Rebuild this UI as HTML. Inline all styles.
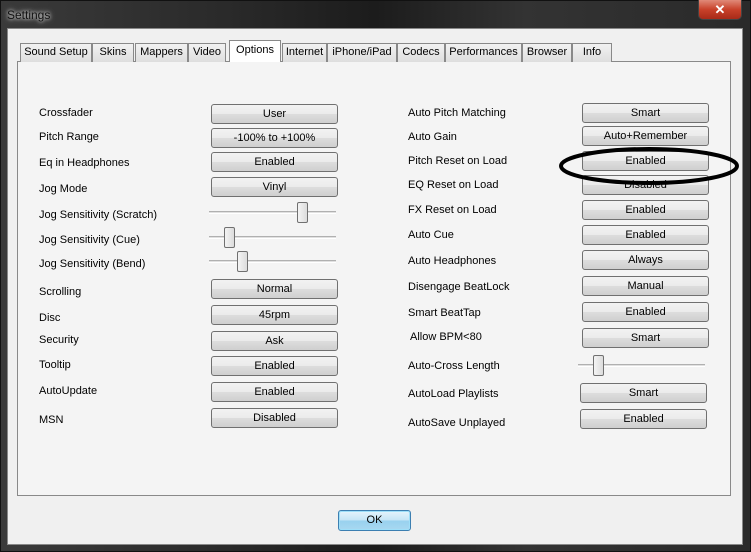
<!DOCTYPE html>
<html><head><style>
*{margin:0;padding:0;box-sizing:border-box}
body{width:751px;height:552px;overflow:hidden;background:#222;font-family:"Liberation Sans",sans-serif;font-size:11px;color:#000;position:relative}
.frame{position:absolute;left:0;top:0;width:751px;height:552px;background:linear-gradient(90deg,#3a3a3a,#2a2a2a 30%,#1c1c1c 50%,#333 70%,#2a2a2a);border:1px solid #111}
.title{position:absolute;left:7px;top:8px;color:#111;font-size:12px;text-shadow:0 0 6px #ccc,0 0 3px #ddd}
.close{position:absolute;left:698px;top:0;width:44px;height:20px;background:linear-gradient(#e08a78,#c8412a 50%,#a82a18);border:1px solid #444;border-top:none;border-radius:0 0 5px 5px;color:#fff;font-weight:bold;text-align:center;font-size:13px;line-height:19px}
.client{position:absolute;left:7px;top:28px;width:736px;height:517px;background:#f0f0f0;border:1px solid #888}
.panel{position:absolute;left:17px;top:61px;width:714px;height:435px;border:1px solid #898989;background:#f4f4f4}
.tab{position:absolute;top:43px;height:19px;border:1px solid #898989;border-bottom:none;background:linear-gradient(#f2f2f2,#dedede);text-align:center;line-height:17px}
.tab.sel{top:40px;height:22px;background:#fff;line-height:19px}
.lbl{position:absolute;line-height:13px}
.btn{position:absolute;width:127px;height:20px;border:1px solid #707070;border-radius:3px;background:linear-gradient(#f2f2f2 0,#ebebeb 50%,#dddddd 51%,#cfcfcf);text-align:center;line-height:18px}
.trk{position:absolute;width:127px;height:3px;border-top:1px solid #b0b0b0;border-bottom:1px solid #fff;background:#e0e0e0}
.th{position:absolute;width:11px;height:21px;border:1px solid #707070;border-radius:2px;background:linear-gradient(90deg,#f4f4f4,#dcdcdc)}
.ok{position:absolute;left:338px;top:510px;width:73px;height:21px;border:1px solid #3c7fb1;border-radius:3px;background:linear-gradient(#e5f4fc,#c4e5f6 50%,#98d1ef 51%,#a8d8f0);box-shadow:inset 0 0 0 1px #9edff9;text-align:center;line-height:19px}
</style></head><body>
<div class="frame"></div>
<div class="title">Settings</div>
<div class="close">✕</div>
<div class="client"></div>
<div class="panel"></div>
<div class="tab" style="left:20px;width:72px">Sound Setup</div>
<div class="tab" style="left:92px;width:42px">Skins</div>
<div class="tab" style="left:135px;width:53px">Mappers</div>
<div class="tab" style="left:188px;width:38px">Video</div>
<div class="tab" style="left:282px;width:45px">Internet</div>
<div class="tab" style="left:327px;width:70px">iPhone/iPad</div>
<div class="tab" style="left:397px;width:48px">Codecs</div>
<div class="tab" style="left:445px;width:77px">Performances</div>
<div class="tab" style="left:522px;width:50px">Browser</div>
<div class="tab" style="left:572px;width:40px">Info</div>
<div class="tab sel" style="left:229px;width:52px">Options</div>

<div class="lbl" style="left:39px;top:107px">Crossfader</div>
<div class="lbl" style="left:39px;top:131px">Pitch Range</div>
<div class="lbl" style="left:39px;top:157px">Eq in Headphones</div>
<div class="lbl" style="left:39px;top:183px">Jog Mode</div>
<div class="lbl" style="left:39px;top:209px">Jog Sensitivity (Scratch)</div>
<div class="lbl" style="left:39px;top:234px">Jog Sensitivity (Cue)</div>
<div class="lbl" style="left:39px;top:258px">Jog Sensitivity (Bend)</div>
<div class="lbl" style="left:39px;top:286px">Scrolling</div>
<div class="lbl" style="left:39px;top:312px">Disc</div>
<div class="lbl" style="left:39px;top:334px">Security</div>
<div class="lbl" style="left:39px;top:359px">Tooltip</div>
<div class="lbl" style="left:39px;top:385px">AutoUpdate</div>
<div class="lbl" style="left:39px;top:414px">MSN</div>

<div class="btn" style="left:211px;top:104px">User</div>
<div class="btn" style="left:211px;top:128px">-100% to +100%</div>
<div class="btn" style="left:211px;top:152px">Enabled</div>
<div class="btn" style="left:211px;top:177px">Vinyl</div>
<div class="trk" style="left:209px;top:211px"></div><div class="th" style="left:297px;top:202px"></div>
<div class="trk" style="left:209px;top:236px"></div><div class="th" style="left:224px;top:227px"></div>
<div class="trk" style="left:209px;top:260px"></div><div class="th" style="left:237px;top:251px"></div>
<div class="btn" style="left:211px;top:279px">Normal</div>
<div class="btn" style="left:211px;top:305px">45rpm</div>
<div class="btn" style="left:211px;top:331px">Ask</div>
<div class="btn" style="left:211px;top:356px">Enabled</div>
<div class="btn" style="left:211px;top:382px">Enabled</div>
<div class="btn" style="left:211px;top:408px">Disabled</div>

<div class="lbl" style="left:408px;top:107px">Auto Pitch Matching</div>
<div class="lbl" style="left:408px;top:131px">Auto Gain</div>
<div class="lbl" style="left:408px;top:155px">Pitch Reset on Load</div>
<div class="lbl" style="left:408px;top:179px">EQ Reset on Load</div>
<div class="lbl" style="left:408px;top:204px">FX Reset on Load</div>
<div class="lbl" style="left:408px;top:229px">Auto Cue</div>
<div class="lbl" style="left:408px;top:255px">Auto Headphones</div>
<div class="lbl" style="left:408px;top:281px">Disengage BeatLock</div>
<div class="lbl" style="left:408px;top:307px">Smart BeatTap</div>
<div class="lbl" style="left:410px;top:331px">Allow BPM&lt;80</div>
<div class="lbl" style="left:408px;top:360px">Auto-Cross Length</div>
<div class="lbl" style="left:408px;top:388px">AutoLoad Playlists</div>
<div class="lbl" style="left:408px;top:417px">AutoSave Unplayed</div>

<div class="btn" style="left:582px;top:103px">Smart</div>
<div class="btn" style="left:582px;top:126px">Auto+Remember</div>
<div class="btn" style="left:582px;top:151px">Enabled</div>
<div class="btn" style="left:582px;top:175px">Disabled</div>
<div class="btn" style="left:582px;top:200px">Enabled</div>
<div class="btn" style="left:582px;top:225px">Enabled</div>
<div class="btn" style="left:582px;top:250px">Always</div>
<div class="btn" style="left:582px;top:276px">Manual</div>
<div class="btn" style="left:582px;top:302px">Enabled</div>
<div class="btn" style="left:582px;top:328px">Smart</div>
<div class="trk" style="left:578px;top:364px"></div><div class="th" style="left:593px;top:355px"></div>
<div class="btn" style="left:580px;top:383px">Smart</div>
<div class="btn" style="left:580px;top:409px">Enabled</div>

<svg style="position:absolute;left:0;top:0" width="751" height="552"><ellipse cx="649" cy="166" rx="88" ry="17" fill="none" stroke="#000" stroke-width="4"/></svg>

<div class="ok">OK</div>
</body></html>
